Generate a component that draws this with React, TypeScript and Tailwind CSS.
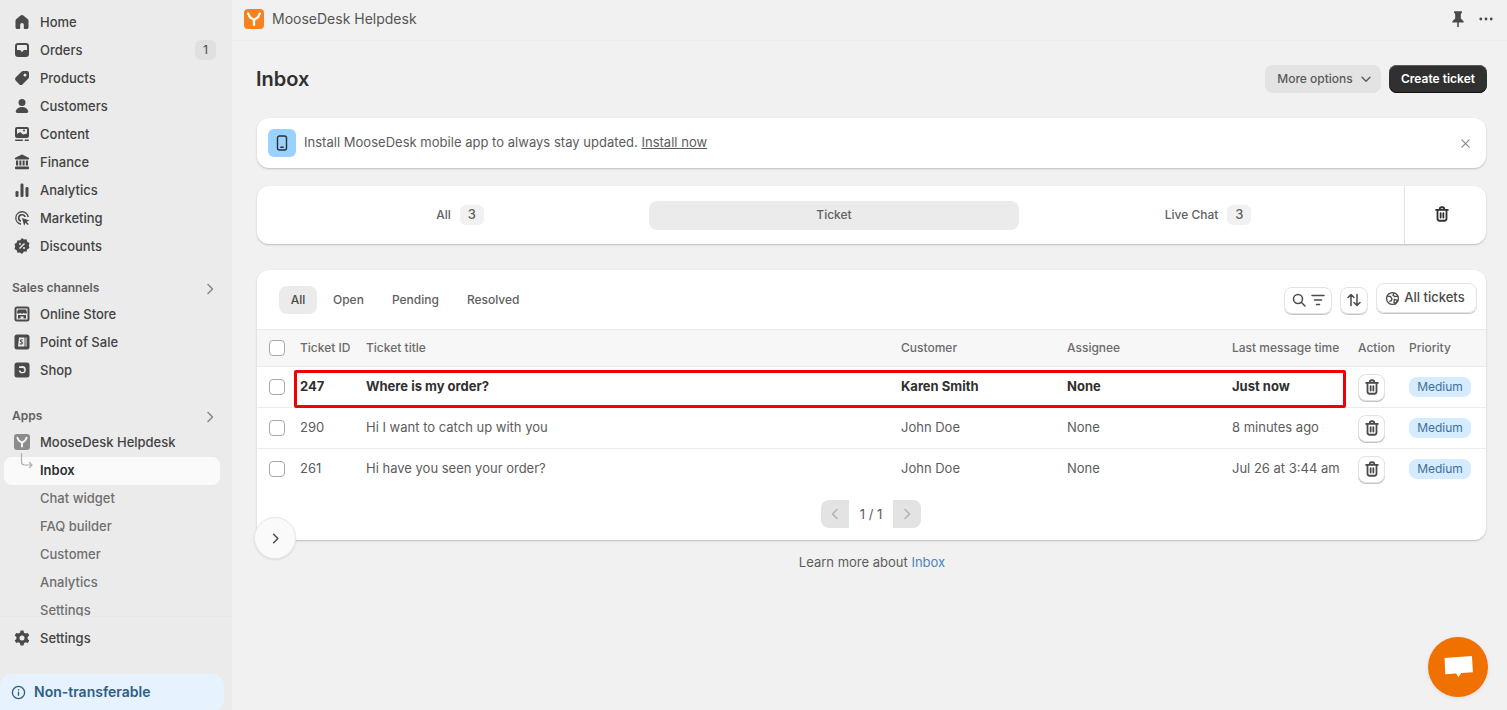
import React from "react";

type IP = { className?: string };
const I = ({ className = "w-5 h-5", children }: IP & { children: React.ReactNode }) => (
  <svg viewBox="0 0 20 20" fill="currentColor" className={className}>{children}</svg>
);

const Home = () => <I><path d="M8.600 3.500a2.200 2.200 0 0 1 2.800 0l4.200 3.400c.6.5.9 1.100.9 1.900v6.400c0 1-.8 1.800-1.800 1.800h-1.900c-.6 0-1-.4-1-1v-3.300a1.800 1.800 0 0 0-3.600 0V16c0 .6-.4 1-1 1H5.300c-1 0-1.800-.8-1.800-1.800V8.800c0-.8.300-1.400.900-1.900z" /></I>;
const Orders = () => <I><path fillRule="evenodd" d="M3 6a3 3 0 0 1 3-3h8a3 3 0 0 1 3 3v8a3 3 0 0 1-3 3H6a3 3 0 0 1-3-3zm2 .2V10h2.600c.7 0 1.100.5 1.300 1 .2.400.500.700 1.100.700s.900-.3 1.100-.7c.2-.5.600-1 1.300-1H15V6.200c0-.7-.5-1.200-1.200-1.200H6.200C5.500 5 5 5.500 5 6.200z" /></I>;
const Tag = () => <I><path fillRule="evenodd" d="M11.300 3H15a2 2 0 0 1 2 2v3.700c0 .8-.3 1.500-.9 2.100l-5.400 5.400a2.500 2.500 0 0 1-3.500 0l-3.400-3.400a2.500 2.500 0 0 1 0-3.500l5.400-5.400c.6-.6 1.300-.9 2.100-.9zM13 8.500a1.500 1.500 0 1 0 0-3 1.500 1.500 0 0 0 0 3z" /></I>;
const Person = () => <I><circle cx="10" cy="6.500" r="3.500" /><path d="M3.800 15c.8-2.500 3.300-4 6.200-4s5.400 1.500 6.200 4c.3 1-.5 2-1.500 2H5.300c-1 0-1.800-1-1.500-2z" /></I>;
const Content = () => <I><path fillRule="evenodd" d="M5 3h10a2 2 0 0 1 2 2v7a2 2 0 0 1-2 2H5a2 2 0 0 1-2-2V5a2 2 0 0 1 2-2zm0 2v5l3-2 3 2.500 4-1V5zm8 1.500a1 1 0 1 1-2 0 1 1 0 0 1 2 0z" /><rect x="3" y="15.500" width="8" height="1.500" rx=".75" /><rect x="12.500" y="15.500" width="4.500" height="1.500" rx=".75" /></I>;
const Bank = () => <I><path d="M9.300 2.800a1.500 1.500 0 0 1 1.400 0l6 3c.8.400.5 1.700-.4 1.700H3.700c-.9 0-1.200-1.300-.4-1.700z" /><rect x="4" y="8.500" width="2.200" height="5" /><rect x="7.400" y="8.500" width="2" height="5" /><rect x="10.600" y="8.500" width="2" height="5" /><rect x="13.800" y="8.500" width="2.200" height="5" /><rect x="3" y="14.500" width="14" height="2.800" rx=".8" /></I>;
const Bars = () => <I><rect x="3.500" y="11" width="3" height="6" rx="1.200" /><rect x="8.500" y="3.500" width="3" height="13.500" rx="1.200" /><rect x="13.500" y="7" width="3" height="10" rx="1.200" /></I>;
const Target = () => <I><path fillRule="evenodd" d="M10 3a7 7 0 0 0-1 13.900v-1.600A5.500 5.500 0 1 1 15.400 9h1.500A7 7 0 0 0 10 3z" /><path fillRule="evenodd" d="M10 6a4 4 0 0 0-1 7.900v-1.600A2.500 2.500 0 1 1 12.300 9h1.600A4 4 0 0 0 10 6z" /><path d="M10 10l7.500 2.500-3 1.300 2.200 2.200-1 1-2.200-2.200-1.300 3z" /></I>;
const Discount = () => <I><path fillRule="evenodd" d="M10 2l2 1.500 2.500-.2.800 2.400 2.200 1.300-.7 2.500.7 2.500-2.200 1.300-.8 2.400-2.500-.2L10 18l-2-1.500-2.500.2-.8-2.400-2.200-1.300.7-2.500-.7-2.500 2.200-1.300.8-2.400 2.500.2zM12 7l-5 5 1 1 5-5zM8 9a1 1 0 1 0 0-2 1 1 0 0 0 0 2zm4 4a1 1 0 1 0 0-2 1 1 0 0 0 0 2z" /></I>;
const Store = () => <I><path fillRule="evenodd" d="M5 2.500h10A2.500 2.500 0 0 1 17.500 5v10a2.500 2.500 0 0 1-2.500 2.500H5A2.500 2.500 0 0 1 2.500 15V5A2.500 2.500 0 0 1 5 2.500zM4.500 4.500v11h11v-11z" /><path fillRule="evenodd" d="M6 5.500h8l1 2.800c0 .9-.8 1.400-1.500 1.400s-1.300-.4-1.700-.9c-.4.500-1 .9-1.800.9s-1.400-.4-1.800-.9c-.4.500-1 .9-1.700.9S5 9.200 5 8.300zM6 11h8v3.500h-2.500v-2h-3v2H6z" /></I>;
const Pos = () => <I><path fillRule="evenodd" d="M5 2.500h10A2.500 2.500 0 0 1 17.500 5v10a2.500 2.500 0 0 1-2.500 2.500H5A2.500 2.500 0 0 1 2.500 15V5A2.500 2.500 0 0 1 5 2.500zM7 5.500 6 14.500h6.500V5.500zM13.500 5.500v9h1V5.500z" /><path d="M9.700 7.200c-1.200 0-1.900.8-1.900 1.600 0 1.500 1.800 1.300 1.800 2.200 0 .4-.4.600-.8.600l-.9-.3-.3 1c.3.200.8.300 1.300.3 1.200 0 2-.7 2-1.700 0-1.500-1.800-1.400-1.800-2.200 0-.3.300-.5.700-.5l.8.200.3-1z" /></I>;
const Shop = () => <I><path fillRule="evenodd" d="M5 2.500h10A2.500 2.500 0 0 1 17.500 5v10a2.500 2.500 0 0 1-2.500 2.500H5A2.500 2.500 0 0 1 2.500 15V5A2.500 2.500 0 0 1 5 2.500zM7 6.500v1.600h3.300a2 2 0 1 1-1.900 2.400H6.700a3.600 3.600 0 1 0 3.500-4.400z" /></I>;
const Gear = () => <I><path fillRule="evenodd" d="M8.500 2.500h3l.5 2.200 1.600.9 2.200-.7 1.500 2.600-1.700 1.500v1.900l1.700 1.500-1.500 2.600-2.200-.7-1.600.9-.5 2.200h-3l-.5-2.200-1.600-.9-2.200.7-1.500-2.600 1.700-1.500V9l-1.700-1.500 1.500-2.600 2.200.7L8 4.700zM10 12.500a2.500 2.500 0 1 0 0-5 2.500 2.500 0 0 0 0 5z" /></I>;
const Chevron = ({ className = "w-4 h-4", dir = "right" }: IP & { dir?: "right" | "left" | "down" }) => (
  <svg viewBox="0 0 16 16" fill="none" stroke="currentColor" strokeWidth="1.600" strokeLinecap="round" strokeLinejoin="round" className={className}>
    <path d={dir === "right" ? "M6 3.500 10.500 8 6 12.500" : dir === "left" ? "M10 3.500 5.500 8 10 12.500" : "M3.500 6 8 10.500 12.500 6"} />
  </svg>
);
const Trash = ({ className = "w-[18px] h-[18px]" }: IP) => (
  <svg viewBox="0 0 20 20" fill="none" stroke="currentColor" strokeWidth="2" strokeLinecap="round" strokeLinejoin="round" className={className}>
    <path d="M3.500 5.500h13M7.500 5.300V4.500a2 2 0 0 1 2-2h1a2 2 0 0 1 2 2v.8M5 5.500v9.500a2.500 2.500 0 0 0 2.500 2.500h5a2.500 2.500 0 0 0 2.500-2.500V5.500M8.500 9v5M11.500 9v5" />
  </svg>
);
const Moose = ({ className = "", color = "#fff" }: IP & { color?: string }) => (
  <svg viewBox="0 0 20 20" className={className} fill="none" stroke={color} strokeWidth="2.600" strokeLinecap="round" strokeLinejoin="round">
    <path d="M3.500 4 5.500 8 10 11 14.500 8 16.500 4M10 11v5.500" />
  </svg>
);

const mainNav: [string, React.FC][] = [
  ["Home", Home], ["Orders", Orders], ["Products", Tag], ["Customers", Person], ["Content", Content],
  ["Finance", Bank], ["Analytics", Bars], ["Marketing", Target], ["Discounts", Discount],
];
const channels: [string, React.FC][] = [["Online Store", Store], ["Point of Sale", Pos], ["Shop", Shop]];

function NavItem({ label, Icon, badge }: { label: string; Icon: React.FC; badge?: string }) {
  return (
    <div className="flex h-7 items-center pl-3 pr-[16px] text-[13px] font-medium text-[#424242]">
      <span className="w-7 flex items-center text-[#4a4a4a]"><Icon /></span>
      <span className="pt-[2px]">{label}</span>
      {badge && <span className="ml-auto flex h-5 w-[21px] items-center justify-center rounded-md bg-[#e0e0e0] text-[12px] text-[#5a5a5a]">{badge}</span>}
    </div>
  );
}

function SectionHead({ label }: { label: string }) {
  return (
    <div className="flex h-[26px] items-center pl-3 pr-[14px] text-[12px] font-semibold text-[#616161]">
      <span className="pt-[1px]">{label}</span>
      <Chevron className="ml-auto mt-[3px] w-4 h-4 text-[#8a8a8a]" />
    </div>
  );
}

function Sidebar() {
  return (
    <aside className="flex h-full w-[232px] shrink-0 flex-col bg-[#ebebeb]">
      <div className="min-h-0 flex-1 overflow-hidden pt-2">
        {mainNav.map(([l, C]) => <NavItem key={l} label={l} Icon={C} badge={l === "Orders" ? "1" : undefined} />)}
        <div className="mt-[14px]"><SectionHead label="Sales channels" /></div>
        {channels.map(([l, C]) => <NavItem key={l} label={l} Icon={C} />)}
        <div className="mt-[18px]"><SectionHead label="Apps" /></div>
        <div className="flex h-7 items-center pl-[14px] text-[13px] font-medium text-[#424242]">
          <span className="mr-[10px] flex h-4 w-4 items-center justify-center rounded-[3px] bg-[#8c8c8c]"><Moose className="h-[14px] w-[14px]" /></span>
          <span className="pt-[2px]">MooseDesk Helpdesk</span>
        </div>
        <div className="relative ml-1 mr-3 mt-[1px] -mb-[1px] flex h-7 items-center rounded-lg bg-[#fafafa] pl-9 text-[13px] font-semibold text-[#303030]">
          <svg viewBox="0 0 16 20" fill="none" stroke="#b0b0b0" strokeWidth="1.200" className="absolute left-4 -top-1 h-5 w-4">
            <path d="M1.500 0v9a3 3 0 0 0 3 3H12M9.500 9.500 12 12l-2.500 2.500" strokeLinecap="round" strokeLinejoin="round" />
          </svg>
          Inbox
        </div>
        {["Chat widget", "FAQ builder", "Customer", "Analytics", "Settings"].map((l) => (
          <div key={l} className="flex h-7 items-center pl-10 pt-[2px] text-[13px] font-medium text-[#6f6f6f]">{l}</div>
        ))}
      </div>
      <div className="h-[94px] shrink-0 border-t border-[#e6e6e6]">
        <div className="mt-[7px]"><NavItem label="Settings" Icon={Gear} /></div>
        <div className="mt-[22px] mr-2 flex h-[37px] items-center rounded-tr-xl rounded-tl-xl rounded-br-xl bg-[#e6f2fd] pl-[11px] text-[14px] font-semibold text-[#2d5f86]">
          <svg viewBox="0 0 16 16" fill="none" stroke="currentColor" strokeWidth="1.400" strokeLinecap="round" className="mr-[8px] h-[15px] w-[15px]">
            <circle cx="8" cy="8" r="6.500" /><path d="M8 7.500v3.500M8 5v.3" />
          </svg>
          <span className="pb-[3px]">Non-transferable</span>
        </div>
      </div>
    </aside>
  );
}

const thCols = "grid grid-cols-[43px_66px_535px_166px_165px_126px_51px_1fr]";

function Row({ id, title, customer, time, bold }: { id: string; title: string; customer: string; time: string; bold?: boolean }) {
  return (
    <div className={`${thCols} h-[41px] items-center border-t border-[#ebebeb] text-[13px] ${bold ? "font-bold text-[#303030]" : "text-[#5c5c5c]"}`}>
      <span className="pl-[12px]"><span className="block h-[14px] w-[14px] box-content rounded-[4px] border border-[#a8a8a8] bg-white" /></span>
      <span>{id}</span>
      <span>{title}</span>
      <span>{customer}</span>
      <span>None</span>
      <span>{time}</span>
      <span>
        <span className="flex h-[27px] w-[27px] items-center justify-center rounded-lg border border-[#e3e3e3] bg-white text-[#4a4a4a] shadow-[0_1px_0_#c4c4c4]"><Trash /></span>
      </span>
      <span>
        <span className="inline-flex h-5 w-[62px] items-center justify-center rounded-lg bg-[#d5ebff] text-[12px] font-normal text-[#3f6f98]">Medium</span>
      </span>
    </div>
  );
}

export default function App() {
  return (
    <div className="relative flex h-[710px] w-full overflow-hidden bg-[#f1f1f1] font-['Inter',sans-serif]">
      <Sidebar />
      <main className="min-w-0 flex-1">
        <header className="flex h-[41px] items-center border-b border-[#ebebeb] pb-[3px] pl-3 pr-[12px]">
          <span className="mr-2 flex h-5 w-5 items-center justify-center rounded-[4px] bg-[#f58220]"><Moose className="h-[18px] w-[18px]" /></span>
          <span className="text-[14px] font-normal text-[#555555]">MooseDesk Helpdesk</span>
          <svg viewBox="0 0 16 16" fill="#4a4a4a" className="ml-auto mr-[11px] h-[18px] w-[18px]">
            <path d="M4.500 1h7v1.500L10.500 3.500v4l2.500 2.500V11H8.700v4h-1.400v-4H3V10l2.500-2.500v-4L4.500 2.500z" />
          </svg>
          <svg viewBox="0 0 16 16" fill="#4a4a4a" className="mr-[1px] h-4 w-4"><circle cx="2.800" cy="8" r="1.400" /><circle cx="8" cy="8" r="1.400" /><circle cx="13.200" cy="8" r="1.400" /></svg>
        </header>

        <div className="ml-[25px] mr-[20px] pt-6">
          <div className="flex h-7 items-center">
            <h1 className="-ml-[1px] text-[20px] font-semibold text-[#303030]">Inbox</h1>
            <button className="ml-auto flex h-7 w-[116px] items-center justify-center gap-[6px] rounded-lg bg-[#e3e3e3] pl-1 text-[12px] font-medium text-[#5a5a5a]">
              More options <Chevron dir="down" className="h-[14px] w-[14px]" />
            </button>
            <button className="ml-2 h-7 w-[98px] rounded-lg bg-[#303030] text-[12px] font-semibold text-white shadow-[inset_0_1px_0_#5a5a5a,inset_0_-1px_0_#111]">Create ticket</button>
          </div>

          <section className="mt-[25px] mr-[1px] flex h-[50px] items-center rounded-xl bg-white pl-[11px] pr-[15px] shadow-[0_1px_2px_rgba(0,0,0,0.22)]">
            <span className="flex h-7 w-7 items-center justify-center rounded-md bg-[#99d1ff]">
              <svg viewBox="0 0 16 16" fill="none" stroke="#303030" strokeWidth="1.400" strokeLinecap="round" className="h-4 w-4"><rect x="3.500" y="1" width="9" height="14" rx="2" /><path d="M6.800 12.300h2.400" /></svg>
            </span>
            <span className="ml-2 text-[13px] tracking-[0.02px] text-[#5c5c5c]">Install MooseDesk mobile app to always stay updated. <span className="underline">Install now</span></span>
            <svg viewBox="0 0 12 12" stroke="#8a8a8a" strokeWidth="1.300" strokeLinecap="round" className="ml-auto h-[11px] w-[11px]"><path d="M2 2l8 8M10 2l-8 8" /></svg>
          </section>

          <section className="mt-[18px] mr-[1px] flex h-[58px] rounded-xl bg-white shadow-[0_1px_2px_rgba(0,0,0,0.22)]">
            <div className="grid flex-1 grid-cols-3 items-center gap-1 pl-[18px] pr-[11px] text-[12px] font-medium text-[#616161]">
              <div className="flex h-[29px] items-center justify-center gap-[9px]">All <span className="flex h-5 w-[24px] items-center justify-center rounded-md bg-[#f1f1f1] text-[13px]">3</span></div>
              <div className="flex h-[29px] items-center justify-center rounded-lg bg-[#ebebeb]">Ticket</div>
              <div className="flex h-[29px] items-center justify-center gap-[9px]">Live Chat <span className="flex h-5 w-[24px] items-center justify-center rounded-md bg-[#f1f1f1] text-[13px]">3</span></div>
            </div>
            <div className="flex w-[82px] items-center justify-center border-l border-[#e3e3e3] pr-2 pb-[2px] text-[#303030]"><Trash /></div>
          </section>

          <section className="relative mt-[26px] mr-[1px] h-[270px] rounded-xl bg-white shadow-[0_1px_2px_rgba(0,0,0,0.22)]">
            <div className="flex h-[59px] items-center pl-[22px] pr-[9px] text-[12px] font-medium text-[#616161]">
              <span className="flex h-7 w-[38px] items-center justify-center rounded-lg bg-[#ebebeb] text-[#4a4a4a]">All</span>
              <span className="ml-4">Open</span>
              <span className="ml-7">Pending</span>
              <span className="ml-7">Resolved</span>
              <span className="ml-auto mt-[1px] flex h-[27px] w-[48px] items-center justify-center gap-[3px] rounded-lg border border-[#e3e3e3] text-[#4a4a4a] shadow-[0_1px_0_#c4c4c4]">
                <svg viewBox="0 0 16 16" fill="none" stroke="currentColor" strokeWidth="1.500" strokeLinecap="round" className="h-4 w-4"><circle cx="7" cy="7" r="4.500" /><path d="M10.500 10.500 14 14" /></svg>
                <svg viewBox="0 0 16 16" fill="none" stroke="currentColor" strokeWidth="1.500" strokeLinecap="round" className="h-4 w-4"><path d="M2 3.500h12M4.500 8h7M6.500 12.500h3" /></svg>
              </span>
              <span className="ml-2 mt-[1px] flex h-[27px] w-[28px] items-center justify-center rounded-lg border border-[#e3e3e3] text-[#4a4a4a] shadow-[0_1px_0_#c4c4c4]">
                <svg viewBox="0 0 16 16" fill="none" stroke="currentColor" strokeWidth="1.500" strokeLinecap="round" strokeLinejoin="round" className="h-4 w-4"><path d="M5 13.500v-11M2 5.500l3-3 3 3M11 2.500v11M8 10.500l3 3 3-3" /></svg>
              </span>
              <span className="ml-2 -mt-[3px] flex h-[30px] w-[101px] items-center justify-center gap-1 rounded-lg border border-[#e3e3e3] pr-[3px] text-[13px] text-[#4a4a4a] shadow-[0_1px_0_#c4c4c4]">
                <svg viewBox="0 0 16 16" fill="none" stroke="currentColor" strokeWidth="1.400" className="h-[15px] w-[15px]"><circle cx="8" cy="8" r="6.300" /><path d="M2.500 5.500 6 6l1.500 2.500-1 2-2 .5M9.500 2l-1 2.500 2 1.500 3.500-.500M10 9l3.500 1-2.500 3.500-1.500-1.500z" /></svg>
                All tickets
              </span>
            </div>

            <div className={`${thCols} h-[37px] items-center border-t border-[#ebebeb] bg-[#f7f7f7] text-[12px] font-medium text-[#6b6b6b]`}>
              <span className="pl-[12px]"><span className="block h-[14px] w-[14px] box-content rounded-[4px] border border-[#a8a8a8] bg-white" /></span>
              <span>Ticket ID</span><span>Ticket title</span><span>Customer</span><span>Assignee</span><span>Last message time</span><span>Action</span><span>Priority</span>
            </div>
            <Row id="247" title="Where is my order?" customer="Karen Smith" time="Just now" bold />
            <Row id="290" title="Hi I want to catch up with you" customer="John Doe" time="8 minutes ago" />
            <Row id="261" title="Hi have you seen your order?" customer="John Doe" time="Jul 26 at 3:44 am" />

            <div className="mt-[11px] -ml-[2px] flex items-center justify-center text-[13px] text-[#5c5c5c]">
              <span className="flex h-7 w-7 items-center justify-center rounded-l-lg bg-[#e3e3e3] text-[#b5b5b5]"><Chevron dir="left" /></span>
              <span className="w-[44px] pl-[1px] pt-[2px] text-center">1 / 1</span>
              <span className="flex h-7 w-7 items-center justify-center rounded-r-lg bg-[#e3e3e3] text-[#b5b5b5]"><Chevron /></span>
            </div>

            <div className="absolute left-[37px] top-[100px] h-[38px] w-[1052px] rounded-[2px] border-[3px] border-[#f00000]" />
            <div className="absolute -left-[3px] top-[247px] flex h-[42px] w-[42px] items-center justify-center rounded-full border border-[#e8e8e8] bg-[#fafafa] text-[#4a4a4a] shadow-[0_1px_2px_rgba(0,0,0,0.1)]"><Chevron className="h-[15px] w-[15px]" /></div>
          </section>

          <p className="mt-[13px] text-center text-[13px] text-[#5c5c5c]">Learn more about <span className="text-[#4a85bd]">Inbox</span></p>
        </div>
      </main>

      <div className="absolute left-[1428px] top-[637px] flex h-[60px] w-[60px] items-center justify-center rounded-full bg-[#f07000] shadow-[0_1px_4px_rgba(0,0,0,0.08)]">
        <svg viewBox="0 0 30 26" fill="#fff" className="h-[25px] w-[29px]"><path d="M0.500 3 29 1 30 18 18 18.800 15 23 12.500 19.200 1.200 20z" /></svg>
      </div>
    </div>
  );
}
